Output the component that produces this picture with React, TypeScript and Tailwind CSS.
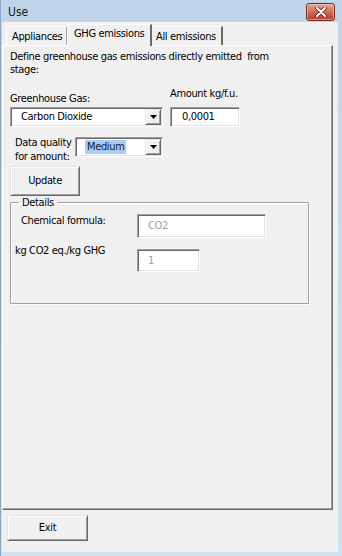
import React from "react";

const font = "font-[family-name:DejaVu_Sans_Condensed,DejaVu_Sans,sans-serif]";

function Sunken({ className = "", children }: { className?: string; children?: React.ReactNode }) {
  return (
    <div
      className={`bg-white border border-t-[#a0a0a0] border-l-[#a0a0a0] border-r-white border-b-white shadow-[inset_1px_1px_0_#696969,inset_-1px_-1px_0_#e3e3e3] ${className}`}
    >
      {children}
    </div>
  );
}

function Raised({ className = "", children }: { className?: string; children?: React.ReactNode }) {
  return (
    <div
      className={`bg-[#f0f0f0] border border-t-[#e3e3e3] border-l-[#e3e3e3] border-r-[#696969] border-b-[#696969] shadow-[inset_1px_1px_0_#ffffff,inset_-1px_-1px_0_#a0a0a0] flex items-center justify-center ${className}`}
    >
      {children}
    </div>
  );
}

function DropBtn() {
  return (
    <div className="w-[16px] h-[16px] mt-[1px] mr-[1px] bg-[#f0f0f0] border border-t-[#e3e3e3] border-l-[#e3e3e3] border-r-[#696969] border-b-[#696969] shadow-[inset_1px_1px_0_#ffffff,inset_-1px_-1px_0_#a0a0a0] flex items-center justify-center">
      <svg width="7" height="4" viewBox="0 0 7 4">
        <polygon points="0,0 7,0 3.5,4" fill="#000" />
      </svg>
    </div>
  );
}

function Combo({ w, children }: { w: string; children: React.ReactNode }) {
  return (
    <Sunken className={`${w} h-[20px] flex items-start justify-between`}>
      <div className="pl-[10px] pt-[2px] leading-[14px] whitespace-nowrap">{children}</div>
      <DropBtn />
    </Sunken>
  );
}

export default function App() {
  return (
    <div className={`${font} text-[11px] tracking-[-0.35px] text-black w-[342px] h-[556px] flex flex-col bg-gradient-to-b from-[#c0d4ea] via-[#cbdcef] to-[#d0e1f2] border-l border-[#8aa6c4]`}>
      {/* title bar */}
      <div className="h-[22px] flex items-start justify-between pl-[7px] pr-[7px]">
        <div className="pt-[5px] text-[12px] leading-[15px] tracking-normal text-[#1a1a1a]">Use</div>
        <div className="mt-[3px] w-[29px] h-[18px] rounded-[3px] border border-[#6e2a20] bg-gradient-to-b from-[#e8a898] via-[#d06a55] to-[#b83a26] flex items-center justify-center shadow-[inset_0_0_0_1px_rgba(255,220,210,0.5)]">
          <svg width="12" height="10" viewBox="0 0 12 10">
            <path d="M2 1 L10 9 M10 1 L2 9" stroke="#5a1e14" strokeWidth="3.6" strokeLinecap="round" />
            <path d="M2 1 L10 9 M10 1 L2 9" stroke="#ffffff" strokeWidth="2" strokeLinecap="round" />
          </svg>
        </div>
      </div>
      {/* client */}
      <div className="flex-1 flex pl-[1px] pr-[4px] pb-[4px]">
        <div className="flex-1 bg-[#f0f0f0] flex flex-col">
          {/* tabs */}
          <div className="h-[23px] flex items-end pl-[4px] relative z-10 whitespace-nowrap">
            <div className="h-[19px] w-[61px] border-t border-l border-white border-r border-r-[#a0a0a0] pl-[5px] pt-[3px] leading-[13px]">
              Appliances
            </div>
            <div className="h-[22px] w-[85px] -mb-[1px] bg-[#f0f0f0] border-t border-l border-white border-r-2 border-r-[#696969] pl-[6px] pt-[2px] leading-[13px]">
              GHG emissions
            </div>
            <div className="h-[19px] w-[71px] border-t border-white border-r-2 border-r-[#696969] pl-[4px] pt-[3px] leading-[13px]">
              All emissions
            </div>
          </div>
          {/* panel */}
          <div className="w-[331px] h-[465px] border border-t-white border-l-white border-r-[#696969] border-b-[#696969] shadow-[inset_-1px_-1px_0_#a0a0a0] flex flex-col">
            <div className="ml-[7px] mt-[4px] leading-[13px] whitespace-nowrap">
              Define greenhouse gas emissions directly emitted&nbsp; from
              <br />
              stage:
            </div>
            <div className="mt-[11px] flex whitespace-nowrap">
              <div className="ml-[7px] w-[153px] flex flex-col">
                <div className="mt-[5px] h-[13px] leading-[13px]">Greenhouse Gas:</div>
                <div className="mt-[2px]">
                  <Combo w="w-[153px]">Carbon Dioxide</Combo>
                </div>
              </div>
              <div className="ml-[7px] flex flex-col">
                <div className="h-[13px] leading-[13px]">Amount kg/f.u.</div>
                <Sunken className="mt-[7px] w-[70px] h-[20px] pl-[11px] pt-[2px] leading-[14px]">0,0001</Sunken>
              </div>
            </div>
            <div className="mt-[9px] flex items-start whitespace-nowrap">
              <div className="ml-[12px] w-[60px] leading-[14px]">
                Data quality
                <br />
                for amount:
              </div>
              <div className="mt-[1px]">
                <Sunken className="w-[88px] h-[20px] flex items-start justify-between">
                  <div className="ml-[9px] mt-[2px] px-[2px] leading-[14px] bg-[#a9ccf1] text-[#0a1a3a]">Medium</div>
                  <DropBtn />
                </Sunken>
              </div>
            </div>
            <div className="mt-[2px] ml-[7px]">
              <Raised className="w-[70px] h-[30px]">Update</Raised>
            </div>
            <fieldset className="ml-[7px] w-[299px] h-[108px] border border-[#a0a0a0] shadow-[inset_1px_1px_0_#ffffff,1px_1px_0_#ffffff] rounded-[1px] whitespace-nowrap">
              <legend className="ml-[8px] px-[3px] leading-[13px]">Details</legend>
              <div className="mt-[5px] flex items-start">
                <div className="pl-[10px] w-[126px] leading-[13px]">Chemical formula:</div>
                <Sunken className="w-[129px] h-[24px] pl-[10px] pt-[4px] leading-[14px] text-[#a0a0a0]">CO2</Sunken>
              </div>
              <div className="mt-[6px] flex items-start">
                <div className="pl-[4px] w-[126px] leading-[13px]">kg CO2 eq./kg GHG</div>
                <Sunken className="mt-[5px] w-[63px] h-[23px] pl-[10px] pt-[4px] leading-[14px] text-[#a0a0a0]">1</Sunken>
              </div>
            </fieldset>
          </div>
          <div className="mt-[5px] ml-[5px]">
            <Raised className="w-[81px] h-[26px]">Exit</Raised>
          </div>
        </div>
      </div>
    </div>
  );
}
